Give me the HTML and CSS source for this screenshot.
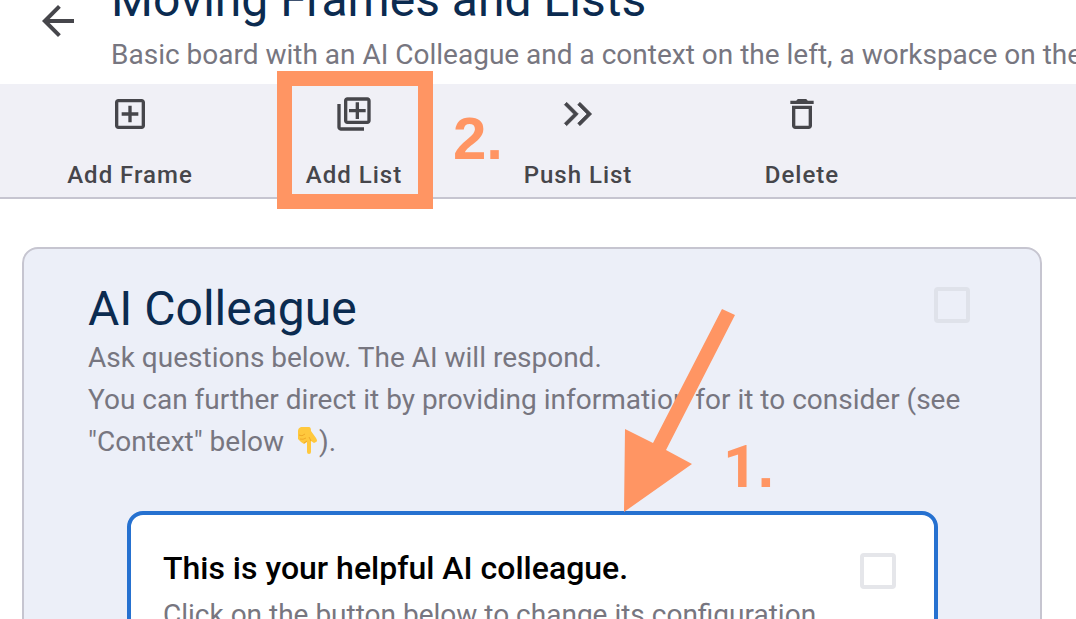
FILE: index.html
```
<!DOCTYPE html>
<html lang="en">
<head>
    <meta charset="UTF-8">
    <meta name="viewport" content="width=device-width, initial-scale=1.0">
    <title>Moving Frames and Lists</title>
    <link rel="stylesheet" href="styles.css">
</head>
<body>
    <header class="page-header">
        <button type="button" class="back-button" aria-label="Back">
            <svg class="icon" viewBox="0 0 24 24"><path d="M20 11H7.83l5.59-5.59L12 4l-8 8 8 8 1.41-1.41L7.83 13H20v-2z"/></svg>
        </button>
        <div class="page-heading">
            <h1 class="title">Moving Frames and Lists</h1>
            <p class="description">Basic board with an AI Colleague and a context on the left, a workspace on the</p>
        </div>
    </header>

    <nav class="toolbar">
        <button type="button" class="tool">
            <svg class="icon" viewBox="0 0 24 24"><path d="M19 3H5c-1.11 0-2 .9-2 2v14c0 1.1.89 2 2 2h14c1.1 0 2-.9 2-2V5c0-1.1-.9-2-2-2zm0 16H5V5h14v14zm-8-2h2v-4h4v-2h-4V7h-2v4H7v2h4z"/></svg>
            Add Frame
        </button>
        <div class="tool-step">
            <button type="button" class="tool">
                <svg class="icon" viewBox="0 0 24 24"><path d="M4 6H2v14c0 1.100.9 2 2 2h14v-2H4V6zm16-4H8c-1.100 0-2 .9-2 2v12c0 1.100.9 2 2 2h12c1.100 0 2-.9 2-2V4c0-1.100-.9-2-2-2zm0 14H8V4h12v12zm-7-1h2v-4h4V9h-4V5h-2v4H9v2h4v4z"/></svg>
                Add List
            </button>
            <span class="highlight"></span>
            <span class="step-number step-two">2.</span>
        </div>
        <button type="button" class="tool">
            <svg class="icon" viewBox="0 0 24 24"><path d="M5.200 5 3.800 6.400 9.400 12l-5.600 5.600L5.200 19l7-7zM13.200 5l-1.400 1.400 5.600 5.600-5.600 5.600 1.400 1.400 7-7z" stroke="currentColor" stroke-width=".4"/></svg>
            Push List
        </button>
        <button type="button" class="tool">
            <svg class="icon" viewBox="0 0 24 24"><path d="M6 19c0 1.100.9 2 2 2h8c1.100 0 2-.9 2-2V7H6v12zM8 9h8v10H8V9zm7.500-5l-1-1h-5l-1 1H5v2h14V4h-3.500z"/></svg>
            Delete
        </button>
    </nav>

    <main class="board">
        <section class="frame">
            <div class="frame-header">
                <div>
                    <h2 class="title">AI Colleague</h2>
                    <p class="description">Ask questions below. The AI will respond.<br>
                        You can further direct it by providing information for it to consider (see "Context" below
                        <svg class="hand" viewBox="-7 0 28 30" role="img" aria-label="pointing down">
                            <path fill="#ffc83d" d="M3 1 11 1q2 0 2 4l5 7q2 3 0 4l-2 1-3-2v11q0 2-2 2t-2-2V16l-3 2-3-2-3-3V5q0-3 3-4z"/>
                            <path fill="none" stroke="#f0a828" d="M1 9q3 2 6-1M2 13q3 1 6-1M6 17l3-2M13 15l-2-4"/>
                        </svg>).</p>
                </div>
                <input type="checkbox" class="check" aria-label="Select AI Colleague">
            </div>
            <article class="card">
                <div>
                    <h3 class="card-title">This is your helpful AI colleague.</h3>
                    <p class="description">Click on the button below to change its configuration</p>
                </div>
                <input type="checkbox" class="check" aria-label="Select card">
            </article>
            <svg class="arrow" viewBox="0 0 112 204" aria-hidden="true"><path d="M99 0 112 6 43 141 69 155 1 203 2 120 30 134z"/></svg>
            <span class="step-number step-one"><span class="digit">1</span>.</span>
        </section>
    </main>
</body>
</html>
```

FILE: styles.css
```
* {
    box-sizing: border-box;
}
body {
    margin: 0;
    height: 100vh;
    overflow: hidden;
    font-family: Roboto, sans-serif;
    background-color: #fff;
    color: #46464b;
}
h1, h2, h3, p {
    margin: 0;
}
button {
    border: none;
    padding: 0;
    background: none;
    color: inherit;
    font-family: inherit;
    cursor: pointer;
}
.icon {
    display: block;
    width: 40px;
    height: 40px;
    fill: currentColor;
}
.title {
    font-size: 48px;
    font-weight: 400;
    line-height: 56px;
    color: #0b2b50;
}
.description {
    font-size: 28px;
    line-height: 42px;
    color: #777680;
}
.page-header {
    display: flex;
    align-items: flex-end;
    gap: 29px;
    height: 84px;
    padding: 0 0 8px 34px;
    overflow: hidden;
    white-space: nowrap;
}
.page-heading .title {
    margin-bottom: 6px;
}
.back-button {
    margin-bottom: 31px;
}
.back-button .icon {
    width: 48px;
    height: 48px;
}
.toolbar {
    display: flex;
    padding-left: 18px;
    background-color: #f0f0f6;
    border-bottom: 2px solid #c6c5d0;
}
.tool {
    display: flex;
    flex-direction: column;
    align-items: center;
    gap: 25px;
    width: 224px;
    padding: 10px 0 6px;
    font-size: 24px;
    font-weight: 500;
    line-height: 32px;
    letter-spacing: 1px;
}
.tool-step {
    position: relative;
}
.highlight {
    position: absolute;
    inset: -13px 33px -12px 35px;
    border: 15px solid #ff9563;
    pointer-events: none;
}
.step-number {
    position: absolute;
    font-family: "Liberation Sans", Arial, sans-serif;
    font-size: 60px;
    font-weight: 700;
    line-height: 60px;
    color: #ff9563;
}
.digit {
    font-family: Roboto, sans-serif;
}
.step-two {
    top: 25px;
    left: 211px;
}
.board {
    padding: 48px 34px 0 22px;
}
.frame {
    position: relative;
    padding: 32px 0 64px;
    background-color: #eceff8;
    border: 2px solid #c6c5d0;
    border-radius: 16px;
}
.frame-header {
    display: flex;
    align-items: flex-start;
    justify-content: space-between;
    padding: 0 70px 0 64px;
}
.frame-header > div {
    margin-right: -36px;
}
.check {
    flex: none;
    appearance: none;
    width: 36px;
    height: 36px;
    margin: 6px 0 0;
    border: 4px solid #e5e6ea;
    border-radius: 4px;
}
.frame-header .check {
    border-color: #dfe2ea;
}
.hand {
    width: 28px;
    height: 30px;
    vertical-align: -5px;
}
.card {
    display: flex;
    align-items: flex-start;
    justify-content: space-between;
    margin: 48px 102px 0 103px;
    padding: 32px 38px 64px 32px;
    background-color: #fff;
    border: 4px solid #2671d0;
    border-radius: 16px;
}
.card-title {
    margin-bottom: 5px;
    font-size: 32px;
    font-weight: 500;
    line-height: 42px;
    color: #000;
}
.arrow {
    position: absolute;
    top: 60px;
    left: 599px;
    width: 112px;
    height: 204px;
    overflow: visible;
    fill: #ff9563;
}
.step-one {
    top: 188px;
    left: 699px;
}
```
